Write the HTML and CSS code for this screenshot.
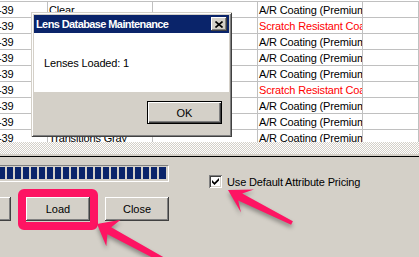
FILE: index.html
```html
<!DOCTYPE html>
<html lang="en">
<head>
  <meta charset="UTF-8">
  <title>Lens Database Maintenance</title>
  <link rel="stylesheet" href="styles.css">
</head>
<body>

<div class="grid">
  <div class="row"><div class="c c1">-39</div><div class="c">Clear</div><div class="c"></div><div class="c">A/R Coating (Premium</div><div class="c"></div></div>
  <div class="row"><div class="c c1">-39</div><div class="c"></div><div class="c"></div><div class="c red">Scratch Resistant Coating</div><div class="c"></div></div>
  <div class="row"><div class="c c1">-39</div><div class="c"></div><div class="c"></div><div class="c">A/R Coating (Premium</div><div class="c"></div></div>
  <div class="row"><div class="c c1">-39</div><div class="c"></div><div class="c"></div><div class="c">A/R Coating (Premium</div><div class="c"></div></div>
  <div class="row"><div class="c c1">-39</div><div class="c"></div><div class="c"></div><div class="c">A/R Coating (Premium</div><div class="c"></div></div>
  <div class="row"><div class="c c1">-39</div><div class="c"></div><div class="c"></div><div class="c red">Scratch Resistant Coating</div><div class="c"></div></div>
  <div class="row"><div class="c c1">-39</div><div class="c"></div><div class="c"></div><div class="c">A/R Coating (Premium</div><div class="c"></div></div>
  <div class="row"><div class="c c1">-39</div><div class="c"></div><div class="c"></div><div class="c">A/R Coating (Premium</div><div class="c"></div></div>
  <div class="row"><div class="c c1">-39</div><div class="c">Transitions Gray</div><div class="c"></div><div class="c">A/R Coating (Premium</div><div class="c"></div></div>
</div>
<div class="hscroll"></div>

<div class="panel">
  <div class="left">
    <div class="progress"><div class="blocks"></div></div>
    <div class="buttons">
      <button type="button" class="btn btn-cut"></button>
      <button type="button" class="btn">Load</button>
      <button type="button" class="btn">Close</button>
    </div>
  </div>
  <label class="check">
    <span class="box">
      <svg width="7" height="7" viewBox="0 0 7 7"><polygon points="0,2 2.5,4.5 7,0 7,2.5 2.5,7 0,4.5" fill="#000"/></svg>
    </span>
    Use Default Attribute Pricing
  </label>
</div>

<div class="dialog">
  <div class="title">
    <span>Lens Database Maintenance</span>
    <span class="x">
      <svg width="8" height="7" viewBox="0 0 8 7"><path d="M0.5 0.5 L7.5 6.5 M7.5 0.5 L0.5 6.5" stroke="#000" stroke-width="1.6"/></svg>
    </span>
  </div>
  <div class="msg">Lenses Loaded: 1</div>
  <div class="foot"><button type="button" class="ok">OK</button></div>
</div>

<div class="highlight"></div>

<svg class="arrows" width="419" height="257" viewBox="0 0 419 257">
  <polygon fill="#fe1463" points="97,224 120.7,219.8 111.2,227.2 172.8,262.5 170.4,266.9 107.4,234.2 106.3,246.2"/>
  <polygon fill="#fe1463" points="228,190 254,189.5 242.2,193.4 292.9,221.2 291.1,224.8 238.2,200.4 241,212.5"/>
</svg>

</body>
</html>
```

FILE: styles.css
```css
* {
  box-sizing: border-box;
}
body {
  margin: 0;
  width: 419px;
  height: 257px;
  overflow: hidden;
  position: relative;
  background: #d4d0c8;
  font-family: "Liberation Sans", Arial, sans-serif;
  font-size: 11px;
  letter-spacing: -0.15px;
  color: #000;
}
.grid {
  height: 142px;
  padding-top: 1px;
  background: #fff;
  overflow: hidden;
}
.row {
  display: grid;
  grid-template-columns: 48px 105px 105px 105px 1fr;
  height: 16px;
  border-top: 1px solid #c0c0c0;
}
.c {
  border-right: 1px solid #c0c0c0;
  padding: 2px 0 0 1px;
  line-height: 13px;
  white-space: nowrap;
  overflow: hidden;
}
.c1 {
  padding-left: 0;
  text-indent: -2px;
}
.red {
  color: #ff0000;
}
.hscroll {
  height: 12px;
  background: repeating-conic-gradient(#d4d0c8 0 25%, #fff 0 50%) 0 0 / 2px 2px;
}
.panel {
  margin-top: 2px;
  border-top: 1px solid #000;
  padding-top: 8px;
  display: flex;
  align-items: flex-start;
}
.left {
  width: 169px;
}
.progress {
  height: 17px;
  border-top: 1px solid #808080;
  border-right: 1px solid #fff;
  border-bottom: 1px solid #fff;
  padding: 1px 2px 1px 0;
}
.blocks {
  height: 12px;
  background: repeating-linear-gradient(90deg, #0a246a 0 6px, transparent 6px 8px);
  background-position: -1px 0;
}
.buttons {
  display: flex;
  gap: 15px;
  margin-top: 15px;
}
.btn {
  width: 64px;
  height: 24px;
  padding: 0;
  border: none;
  background: #d4d0c8;
  font: inherit;
  color: #000;
  box-shadow: inset -1px -1px #404040, inset 1px 1px #fff, inset -2px -2px #808080;
}
.btn-cut {
  width: 11px;
  box-shadow: inset -1px -1px #404040, inset 0 1px #fff, inset -2px -2px #808080;
}
.check {
  display: flex;
  align-items: center;
  gap: 5px;
  margin: 10px 0 0 40px;
}
.box {
  width: 13px;
  height: 13px;
  background: #fff;
  display: flex;
  align-items: center;
  justify-content: center;
  box-shadow: inset 1px 1px #808080, inset -1px -1px #fff, inset 2px 2px #404040, inset -2px -2px #d4d0c8;
}
.box svg {
  display: block;
}
.dialog {
  position: absolute;
  left: 31px;
  top: 12px;
  width: 201px;
  height: 125px;
  padding: 3px;
  background: #d4d0c8;
  display: flex;
  flex-direction: column;
  box-shadow: inset 1px 1px #d4d0c8, inset -1px -1px #404040, inset 2px 2px #fff, inset -2px -2px #808080;
}
.title {
  height: 18px;
  background: #0a246a;
  color: #fff;
  font-weight: bold;
  letter-spacing: -0.6px;
  display: flex;
  align-items: center;
  justify-content: space-between;
  padding: 0 2px;
}
.x {
  width: 16px;
  height: 14px;
  background: #d4d0c8;
  display: flex;
  align-items: center;
  justify-content: center;
  box-shadow: inset -1px -1px #404040, inset 1px 1px #fff, inset -2px -2px #808080;
}
.x svg {
  display: block;
}
.msg {
  height: 59px;
  background: #fff;
  padding-left: 10px;
  display: flex;
  align-items: center;
}
.foot {
  flex: 1;
  display: flex;
  justify-content: flex-end;
  align-items: flex-start;
  padding: 9px 7px 0 0;
}
.ok {
  width: 75px;
  height: 23px;
  padding: 0;
  border: 1px solid #000;
  background: #d4d0c8;
  font: inherit;
  color: #000;
  box-shadow: inset 1px 1px #fff, inset -1px -1px #404040, inset -2px -2px #808080;
}
.highlight {
  position: absolute;
  left: 18px;
  top: 189px;
  width: 80px;
  height: 41px;
  border: 8px solid #fe1463;
  border-radius: 6px;
}
.arrows {
  position: absolute;
  left: 0;
  top: 0;
  pointer-events: none;
  filter: drop-shadow(0 3px 2px rgba(0, 0, 0, 0.35));
}
```
